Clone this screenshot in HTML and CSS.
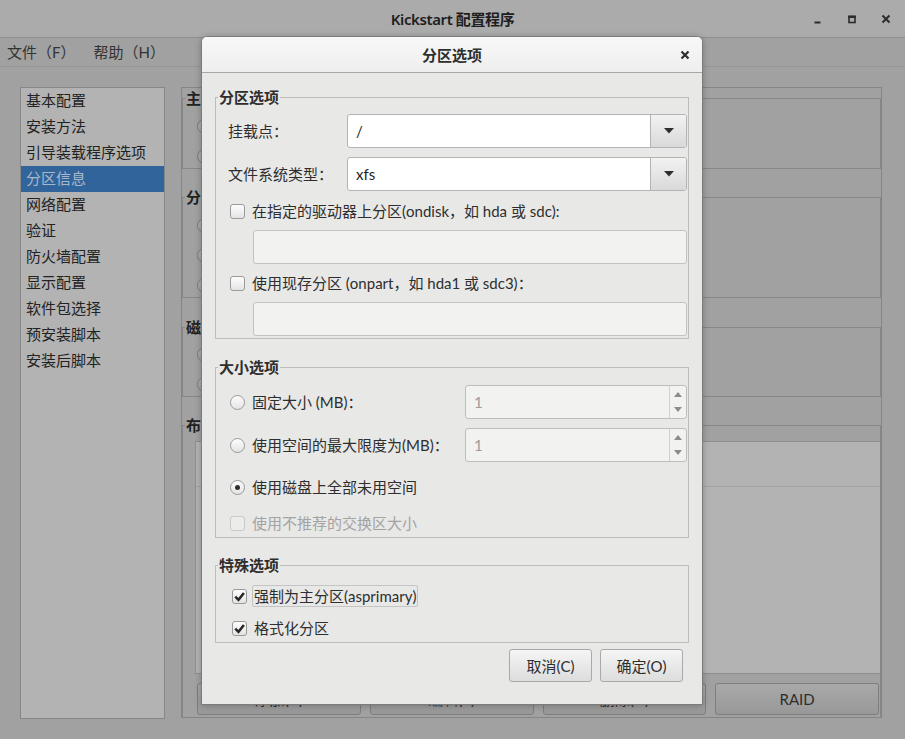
FILE: index.html
```html
<!DOCTYPE html>
<html lang="zh-CN">
<head>
<meta charset="utf-8">
<title>Kickstart 配置程序</title>
<link rel="stylesheet" href="styles.css">
</head>
<body>
<div class="window">
  <header class="titlebar">
    <span></span>
    <div class="title">Kickstart 配置程序</div>
    <div class="wm">
      <span class="wm-btn"><svg width="10" height="10" viewBox="0 0 10 10"><rect x="1.5" y="7.5" width="6" height="2" fill="#2b2b2b"/></svg></span>
      <span class="wm-btn"><svg width="10" height="10" viewBox="0 0 10 10"><rect x="2" y="2.5" width="6" height="6" fill="none" stroke="#2b2b2b" stroke-width="1.6"/><rect x="1.2" y="1.6" width="7.6" height="2.4" fill="#2b2b2b"/></svg></span>
      <span class="wm-btn"><svg width="10" height="10" viewBox="0 0 10 10"><path d="M1.5 1.5l7 7M8.5 1.5l-7 7" stroke="#2b2b2b" stroke-width="2"/></svg></span>
    </div>
  </header>
  <nav class="menubar">
    <span class="menu">文件（F）</span>
    <span class="menu">帮助（H）</span>
  </nav>
  <div class="main">
    <ul class="sidebar">
      <li>基本配置</li>
      <li>安装方法</li>
      <li>引导装载程序选项</li>
      <li class="selected">分区信息</li>
      <li>网络配置</li>
      <li>验证</li>
      <li>防火墙配置</li>
      <li>显示配置</li>
      <li>软件包选择</li>
      <li>预安装脚本</li>
      <li>安装后脚本</li>
    </ul>
    <section class="panel">
      <fieldset class="bframe bf1">
        <legend>主</legend>
        <div class="bcontent">
          <div class="brow"><span class="radio"></span></div>
          <div class="brow"><span class="radio"></span></div>
        </div>
      </fieldset>
      <fieldset class="bframe bf2">
        <legend>分</legend>
        <div class="bcontent">
          <div class="brow"><span class="radio"></span></div>
          <div class="brow"><span class="radio"></span></div>
          <div class="brow"><span class="radio"></span></div>
        </div>
      </fieldset>
      <fieldset class="bframe bf3">
        <legend>磁</legend>
        <div class="bcontent">
          <div class="brow"><span class="radio"></span></div>
          <div class="brow"><span class="radio"></span></div>
        </div>
      </fieldset>
      <fieldset class="bframe bf4">
        <legend>布</legend>
        <div class="blist">
          <div class="blist-head"></div>
        </div>
        <div class="bbuttons">
          <span class="bbtn">添加(A)</span>
          <span class="bbtn">编辑(E)</span>
          <span class="bbtn">删除(D)</span>
          <span class="bbtn">RAID</span>
        </div>
      </fieldset>
    </section>
  </div>
</div>

<div class="dialog">
  <header class="dhead">
    <span></span>
    <div class="dtitle">分区选项</div>
    <span class="dclose"><svg width="10" height="10" viewBox="0 0 10 10"><path d="M1.5 1.5l7 7M8.5 1.5l-7 7" stroke="#2e2e2e" stroke-width="2.2"/></svg></span>
  </header>
  <div class="dbody">
    <fieldset class="dframe df1">
      <legend>分区选项</legend>
      <div class="dcontent">
        <div class="crow">
          <span class="clabel">挂载点：</span>
          <div class="combo"><span class="ctext">/</span><span class="cbtn"><svg width="10" height="6" viewBox="0 0 10 6"><path d="M0 0h10L5 5.5z" fill="#2e2e2e"/></svg></span></div>
        </div>
        <div class="crow">
          <span class="clabel">文件系统类型：</span>
          <div class="combo"><span class="ctext">xfs</span><span class="cbtn"><svg width="10" height="6" viewBox="0 0 10 6"><path d="M0 0h10L5 5.5z" fill="#2e2e2e"/></svg></span></div>
        </div>
        <div class="orow r-check1"><span class="check"></span><span>在指定的驱动器上分区(ondisk，如 hda 或 sdc):</span></div>
        <div class="entry"></div>
        <div class="orow r-check2"><span class="check"></span><span>使用现存分区 (onpart，如 hda1 或 sdc3)：</span></div>
        <div class="entry"></div>
      </div>
    </fieldset>

    <fieldset class="dframe df2">
      <legend>大小选项</legend>
      <div class="dcontent">
        <div class="srow">
          <span class="radio"></span><span>固定大小 (MB)：</span>
          <div class="spin"><span class="stext">1</span><span class="sbtns"><svg width="8" height="5" viewBox="0 0 8 5"><path d="M0 5h8L4 0z" fill="#8c8c8c"/></svg><svg width="8" height="5" viewBox="0 0 8 5"><path d="M0 0h8L4 5z" fill="#8c8c8c"/></svg></span></div>
        </div>
        <div class="srow srow2">
          <span class="radio"></span><span>使用空间的最大限度为(MB)：</span>
          <div class="spin"><span class="stext">1</span><span class="sbtns"><svg width="8" height="5" viewBox="0 0 8 5"><path d="M0 5h8L4 0z" fill="#8c8c8c"/></svg><svg width="8" height="5" viewBox="0 0 8 5"><path d="M0 0h8L4 5z" fill="#8c8c8c"/></svg></span></div>
        </div>
        <div class="orow r-all"><span class="radio on"></span><span>使用磁盘上全部未用空间</span></div>
        <div class="orow r-swap disabled"><span class="check"></span><span>使用不推荐的交换区大小</span></div>
      </div>
    </fieldset>

    <fieldset class="dframe df3">
      <legend>特殊选项</legend>
      <div class="dcontent">
        <div class="orow r-sp1"><span class="check on"><svg width="13" height="13" viewBox="0 0 13 13"><path d="M2.3 6.6l3.2 3.2 5.4-6.8" fill="none" stroke="#262626" stroke-width="2.5"/></svg></span><span class="focus">强制为主分区(asprimary)</span></div>
        <div class="orow r-sp2"><span class="check on"><svg width="13" height="13" viewBox="0 0 13 13"><path d="M2.3 6.6l3.2 3.2 5.4-6.8" fill="none" stroke="#262626" stroke-width="2.5"/></svg></span><span class="plain">格式化分区</span></div>
      </div>
    </fieldset>

    <div class="dbuttons">
      <span class="dbtn">取消(C)</span>
      <span class="dbtn">确定(O)</span>
    </div>
  </div>
</div>
</body>
</html>
```

FILE: styles.css
```css
* { box-sizing: border-box; }

html, body {
  margin: 0;
  padding: 0;
}

body {
  width: 905px;
  height: 739px;
  overflow: hidden;
  position: relative;
  background: #a1a1a1;
  font-family: "Lato", "Noto Sans CJK SC", sans-serif;
  font-size: 15px;
  line-height: 20px;
  color: #2b2b2b;
}

/* ---------- main window (dimmed) ---------- */
.titlebar {
  height: 38px;
  background: #ababab;
  border-bottom: 1px solid #8e8e8e;
  display: grid;
  grid-template-columns: 1fr auto 1fr;
  align-items: center;
}

.title {
  font-family: "Noto Sans", "Noto Sans CJK SC", sans-serif;
  font-size: 15px;
  color: #1e1e1e;
  font-weight: 600;
  letter-spacing: -0.4px;
}

.wm {
  justify-self: end;
  display: flex;
  padding-right: 2px;
}

.wm-btn {
  width: 34px;
  height: 20px;
  display: flex;
  align-items: center;
  justify-content: center;
}

.menubar {
  height: 29px;
  border-bottom: 1px solid #959595;
  display: flex;
  align-items: center;
  padding-left: 7px;
  color: #333;
}

.menu { margin-right: 18px; }

.main {
  display: flex;
  gap: 16px;
  padding: 20px 0 0 20px;
}

.sidebar {
  list-style: none;
  margin: 0;
  padding: 0;
  width: 145px;
  height: 632px;
  background: #b3b3b3;
  border: 1px solid #878787;
}

.sidebar li {
  height: 26px;
  line-height: 25px;
  padding-left: 5px;
  color: #222;
  white-space: nowrap;
}

.sidebar li.selected {
  background: #31649b;
  color: #a9b8c9;
}

.panel {
  width: 701px;
  height: 631px;
  border: 1px solid #858585;
  display: flex;
  flex-direction: column;
}

.bframe {
  margin: 0;
  padding: 0;
  border: 1px solid #878787;
  min-width: 0;
}

.bframe legend {
  margin-left: 2px;
  padding: 0 1px;
  font-weight: bold;
  line-height: 20px;
  color: #222;
}

.bcontent {
  padding: 8px 0 2px 14px;
  display: flex;
  flex-direction: column;
  gap: 10px;
}

.bf3 .bcontent { padding-top: 7px; }

.bf2 { margin-top: 18px; }
.bf3 { margin-top: 19px; }
.bf4 {
  margin-top: 18px;
  flex: 1;
  border-bottom: none;
  display: flex;
  flex-direction: column;
}

.brow {
  height: 20px;
  display: flex;
  align-items: center;
}

.panel .radio {
  border-color: #7b7b7b;
  background: linear-gradient(#b0b0b0, #a2a2a2);
}

.blist {
  margin: 6px 0 0 12px;
  height: 233px;
  background: #b3b3b3;
  border: 1px solid #8e8e8e;
  border-right: none;
}

.blist-head {
  height: 45px;
  border-bottom: 1px solid #a2a2a2;
}

.bbuttons {
  display: grid;
  grid-template-columns: repeat(4, 1fr);
  gap: 9px;
  margin: 9px 1px 0 14px;
}

.bbtn {
  height: 32px;
  border: 1px solid #7e7e7e;
  border-radius: 3px;
  background: linear-gradient(#a9a9a9, #989898);
  display: flex;
  align-items: center;
  justify-content: center;
  color: #2e2e2e;
  font-size: 15px;
}

/* ---------- shared controls ---------- */
.radio {
  width: 15px;
  height: 15px;
  flex: none;
  border-radius: 50%;
  border: 1px solid #9a9a9a;
  background: linear-gradient(#fdfdfd, #e4e4e4);
  display: inline-flex;
  align-items: center;
  justify-content: center;
}

.radio.on::after {
  content: "";
  width: 5px;
  height: 5px;
  border-radius: 50%;
  background: #2e2e2e;
}

.check {
  width: 15px;
  height: 15px;
  flex: none;
  border-radius: 3px;
  border: 1px solid #9a9a9a;
  background: linear-gradient(#fdfdfd, #e4e4e4);
  display: inline-flex;
  align-items: center;
  justify-content: center;
}

/* ---------- dialog ---------- */
.dialog {
  position: absolute;
  left: 201px;
  top: 36px;
  width: 502px;
  height: 669px;
  background: #e8e8e7;
  border: 1px solid #7c7c7c;
  border-radius: 6px 6px 0 0;
  box-shadow: 0 1px 6px rgba(0, 0, 0, 0.25);
  display: flex;
  flex-direction: column;
  color: #2e2e2e;
}

.dhead {
  height: 36px;
  flex: none;
  border-bottom: 1px solid #a6a6a6;
  border-radius: 5px 5px 0 0;
  background: linear-gradient(#f8f8f8, #eeeeee);
  display: grid;
  grid-template-columns: 1fr auto 1fr;
  align-items: center;
}

.dtitle {
  font-weight: bold;
  color: #2e2e2e;
}

.dclose {
  justify-self: end;
  margin-right: 12px;
  display: flex;
}

.dbody {
  padding: 14px 13px 0 13px;
  display: flex;
  flex-direction: column;
}

.dframe {
  margin: 0;
  padding: 0;
  border: 1px solid #bcbcbc;
  min-width: 0;
}

.dframe legend {
  margin-left: 2px;
  padding: 0 1px;
  font-weight: bold;
  line-height: 20px;
  color: #2e2e2e;
}

.dcontent {
  display: flex;
  flex-direction: column;
  padding: 7px 1px 2px 12px;
}

.df2 { margin-top: 18px; }
.df2 .dcontent { padding-top: 8px; padding-bottom: 4px; }
.df3 { margin-top: 17px; }
.df3 .dcontent { padding-top: 11px; padding-bottom: 4px; }

.crow {
  height: 34px;
  display: flex;
  align-items: center;
  margin-bottom: 9px;
}

.crow + .crow { margin-bottom: 0; }

.clabel {
  width: 119px;
  flex: none;
  white-space: nowrap;
}

.combo {
  flex: 1;
  height: 34px;
  display: flex;
  background: #ffffff;
  border: 1px solid #b3b3b3;
  border-radius: 3px;
  overflow: hidden;
}

.ctext {
  flex: 1;
  padding-left: 8px;
  display: flex;
  align-items: center;
  color: #1e1e1e;
}

.cbtn {
  width: 36px;
  flex: none;
  border-left: 1px solid #b3b3b3;
  background: linear-gradient(#f2f2f2, #d9d9d9);
  display: flex;
  align-items: center;
  justify-content: center;
}

.orow {
  height: 20px;
  display: flex;
  align-items: center;
  gap: 7px;
  padding-left: 2px;
  white-space: nowrap;
}

.r-check1 { margin-top: 10px; }
.r-check2 { margin-top: 9px; }

.entry {
  margin: 9px 0 0 25px;
  height: 34px;
  background: #f2f2f0;
  border: 1px solid #c2c2c2;
  border-radius: 3px;
}

.srow {
  height: 34px;
  display: flex;
  align-items: center;
  gap: 7px;
  padding-left: 2px;
  white-space: nowrap;
}

.srow2 { margin-top: 9px; }

.spin {
  margin-left: auto;
  width: 222px;
  height: 34px;
  display: flex;
  background: #f2f2f0;
  border: 1px solid #bdbdbd;
  border-radius: 3px;
}

.stext {
  flex: 1;
  padding-left: 8px;
  display: flex;
  align-items: center;
  color: #9c9c9c;
}

.sbtns {
  width: 17px;
  border-left: 1px solid #d0d0d0;
  display: flex;
  flex-direction: column;
  justify-content: space-between;
  align-items: center;
  padding: 6px 0 6px;
}

.r-all { margin-top: 15px; }
.r-swap { margin-top: 16px; }

.disabled { color: #a3a3a3; }
.disabled .check {
  border-color: #c9c9c9;
  background: #ececeb;
}

.r-sp1, .r-sp2 {
  padding-left: 4px;
  gap: 5px;
}

.r-sp2 { margin-top: 12px; }

.focus {
  height: 22px;
  line-height: 20px;
  padding: 0 1px;
  border: 1px solid #c4c4c4;
  border-radius: 2px;
}

.plain { padding-left: 2px; }

.dbuttons {
  display: flex;
  justify-content: flex-end;
  gap: 8px;
  margin: 6px 6px 0 0;
}

.dbtn {
  width: 83px;
  height: 33px;
  border: 1px solid #a9a9a9;
  border-radius: 3px;
  background: linear-gradient(#f5f5f5, #dddddd);
  display: flex;
  align-items: center;
  justify-content: center;
  color: #2e2e2e;
}
```
